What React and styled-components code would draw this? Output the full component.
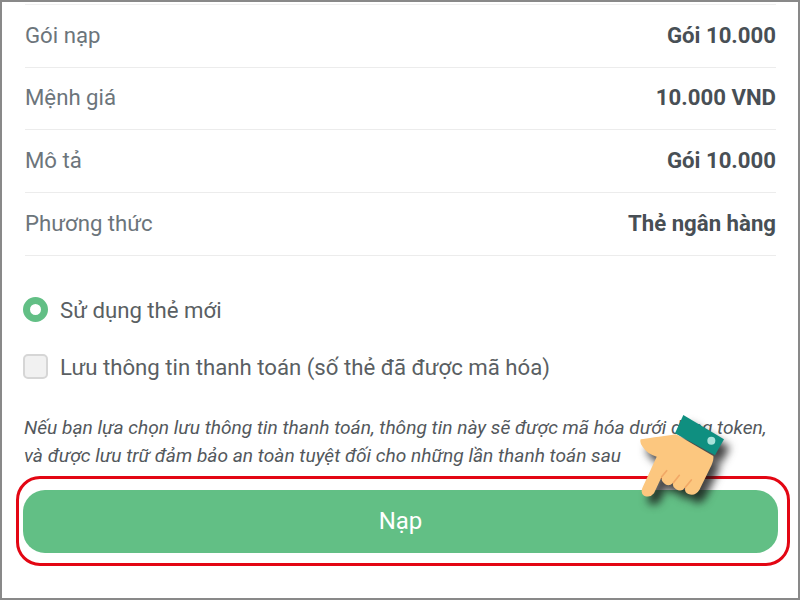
import styled, { createGlobalStyle } from "styled-components";

const GlobalStyle = createGlobalStyle`
  html, body {
    margin: 0;
    padding: 0;
    background: #fff;
  }
`;

const Frame = styled.div`
  position: relative;
  width: 800px;
  height: 600px;
  box-sizing: border-box;
  border: 2px solid #898989;
  background: #fff;
  padding: 2px 22px 0 21px;
  overflow: hidden;
  font-family: Roboto, "Noto Sans", sans-serif;
`;

const Details = styled.div`
  margin: 0 0 0 2px;
  border-top: 1px solid #f0f0f0;
`;

const Row = styled.div`
  height: 62.65px;
  box-sizing: border-box;
  padding-bottom: 2px;
  display: flex;
  align-items: center;
  justify-content: space-between;
  border-bottom: 1px solid #ececec;
  font-size: 22.2px;
`;

const Label = styled.span`
  color: #6c757b;
`;

const Value = styled.span`
  color: #484f55;
  font-weight: 700;
`;

const Options = styled.div`
  margin-top: 39px;
  display: flex;
  flex-direction: column;
  gap: 27px;
`;

const Option = styled.div`
  display: flex;
  align-items: center;
  gap: 12px;
  height: 30px;
  font-size: 22.2px;
  color: #5a5f63;
`;

const Radio = styled.span`
  width: 25px;
  height: 25px;
  box-sizing: border-box;
  border-radius: 50%;
  border: 7px solid #62bf85;
  background: #fff;
`;

const Checkbox = styled.span`
  width: 25px;
  height: 25px;
  box-sizing: border-box;
  border-radius: 5px;
  border: 2px solid #d6d6d6;
  background: #f1f1f1;
`;

const Note = styled.p`
  margin: 32px 0 0 1px;
  font-size: 19.15px;
  line-height: 28px;
  font-style: italic;
  color: #53585c;
  white-space: nowrap;
`;

const PayButton = styled.div`
  margin: 20px -2px 0 0;
  height: 63px;
  border-radius: 22px;
  background: #62bf85;
  color: #fff;
  font-size: 24px;
  font-weight: 400;
  display: flex;
  align-items: center;
  justify-content: center;
`;

const Highlight = styled.div`
  position: absolute;
  left: 14px;
  top: 474px;
  width: 774px;
  height: 90px;
  box-sizing: border-box;
  border: 3px solid #e30613;
  border-radius: 24px;
`;

const Hand = styled.svg`
  position: absolute;
  left: 598px;
  top: 398px;
  width: 200px;
  height: 120px;
  filter: drop-shadow(6px 8px 4px rgba(20, 20, 20, 0.8));
`;

export default function App() {
  const rows = [
    ["Gói nạp", "Gói 10.000"],
    ["Mệnh giá", "10.000 VND"],
    ["Mô tả", "Gói 10.000"],
    ["Phương thức", "Thẻ ngân hàng"],
  ];

  return (
    <Frame>
      <GlobalStyle />
      <Details>
        {rows.map(([label, value]) => (
          <Row key={label}>
            <Label>{label}</Label>
            <Value>{value}</Value>
          </Row>
        ))}
      </Details>
      <Options>
        <Option>
          <Radio />
          Sử dụng thẻ mới
        </Option>
        <Option>
          <Checkbox />
          Lưu thông tin thanh toán (số thẻ đã được mã hóa)
        </Option>
      </Options>
      <Note>
        Nếu bạn lựa chọn lưu thông tin thanh toán, thông tin này sẽ được mã hóa dưới dạng token,
        <br />
        và được lưu trữ đảm bảo an toàn tuyệt đối cho những lần thanh toán sau
      </Note>
      <PayButton>Nạp</PayButton>
      <Highlight />
      <Hand viewBox="0 0 600 360">
        <path d="M250 45 L372 118 L345 166 L225 100 Z" fill="#0f8f80" />
        <circle cx="334" cy="122" r="12" fill="#a8e2da" />
        <path
          d="M122 118 Q150 114 228 103 L340 168 Q342 182 330 205 L298 270 Q285 290 265 282 Q252 276 256 262 Q245 278 228 268 Q215 260 220 248 Q205 262 192 250 Q182 240 185 230 L162 280 Q150 295 132 287 Q120 278 128 262 L170 170 Q140 160 128 140 Q118 128 122 118 Z"
          fill="#fcc77f"
        />
        <path d="M185 230 L200 212 M220 248 L238 226 M256 262 L274 240" stroke="#f1a866" strokeWidth="5" strokeLinecap="round" fill="none" />
      </Hand>
    </Frame>
  );
}
